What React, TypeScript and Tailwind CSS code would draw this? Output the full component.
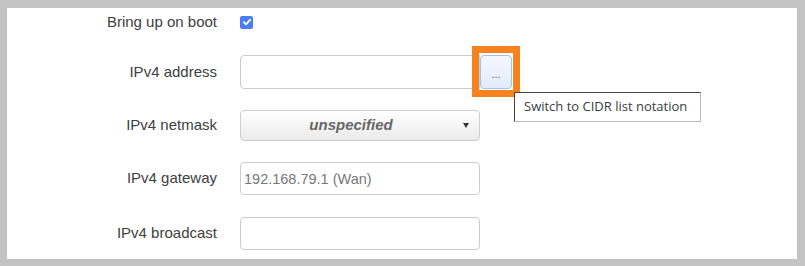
import React from 'react'

const labelCls =
  "w-[210px] shrink-0 text-right text-[15px] text-[#404040] font-['Liberation_Sans',Arial,sans-serif]"

function Row({
  label,
  className,
  children,
}: {
  label: string
  className: string
  children: React.ReactNode
}) {
  return (
    <div className={`flex items-center gap-[23px] ${className}`}>
      <div className={labelCls}>{label}</div>
      {children}
    </div>
  )
}

const inputCls =
  "w-[240px] rounded-[4px] border border-[#cccccc] bg-white px-[3px] text-[14.5px] text-[#777] font-['Liberation_Sans',Arial,sans-serif] outline-none"

export default function App() {
  return (
    <div className="h-[266px] w-[805px] bg-[#c3c3c3] pl-[7px] pt-[8px]">
      <div className="relative flex h-[251px] w-[790px] flex-col bg-white">
        <Row label="Bring up on boot" className="h-[28px]">
          <span className="flex h-[13px] w-[13px] items-center justify-center rounded-[2px] bg-[#4a7cf6]">
            <svg width="10" height="10" viewBox="0 0 10 10">
              <path
                d="M1.8 5.2 L4 7.3 L8.3 2.6"
                fill="none"
                stroke="white"
                strokeWidth="1.8"
                strokeLinecap="round"
                strokeLinejoin="round"
              />
            </svg>
          </span>
        </Row>

        <Row label="IPv4 address" className="mt-[19px] h-[34px]">
          <div className="flex h-[34px]">
            <input className={`${inputCls} h-[34px] rounded-r-none`} />
            <button className="flex h-[34px] w-[32px] items-center justify-center rounded-[4px] border border-[#9fc0f5] bg-gradient-to-b from-[#f4f8ff] to-[#e3ecfb] pt-[4px] text-[11px] leading-none text-[#555] font-['Liberation_Sans',Arial,sans-serif]">
              ...
            </button>
          </div>
        </Row>

        <Row label="IPv4 netmask" className="mt-[21px] h-[31px]">
          <div className="relative flex h-[31px] w-[240px] items-center justify-center rounded-[4px] border border-[#cfcfcf] bg-gradient-to-b from-white to-[#ebebeb] pr-[18px] text-[15px] font-bold italic text-[#666] font-['Liberation_Sans',Arial,sans-serif]">
            unspecified
            <span className="absolute right-[10px] top-[12px] h-0 w-0 border-x-[3px] border-t-[5px] border-x-transparent border-t-[#333]" />
          </div>
        </Row>

        <Row label="IPv4 gateway" className="mt-[21px] h-[33px]">
          <input className={`${inputCls} h-[33px]`} defaultValue="192.168.79.1 (Wan)" />
        </Row>

        <Row label="IPv4 broadcast" className="mt-[22px] h-[33px]">
          <input className={`${inputCls} h-[33px]`} />
        </Row>

        {/* highlight round the button */}
        <div className="absolute left-[465px] top-[38px] h-[51px] w-[48px] border-[7px] border-[#f5821f]" />

        {/* tooltip */}
        <div className="absolute left-[507px] top-[84px] flex h-[30px] w-[187px] items-center border border-l-[#444] border-t-[#444] border-r-[#bbb] border-b-[#bbb] bg-white pl-[9px] text-[13px] text-[#3c3c3c] font-['Open_Sans','Noto_Sans',sans-serif]">
          Switch to CIDR list notation
        </div>
      </div>
    </div>
  )
}
